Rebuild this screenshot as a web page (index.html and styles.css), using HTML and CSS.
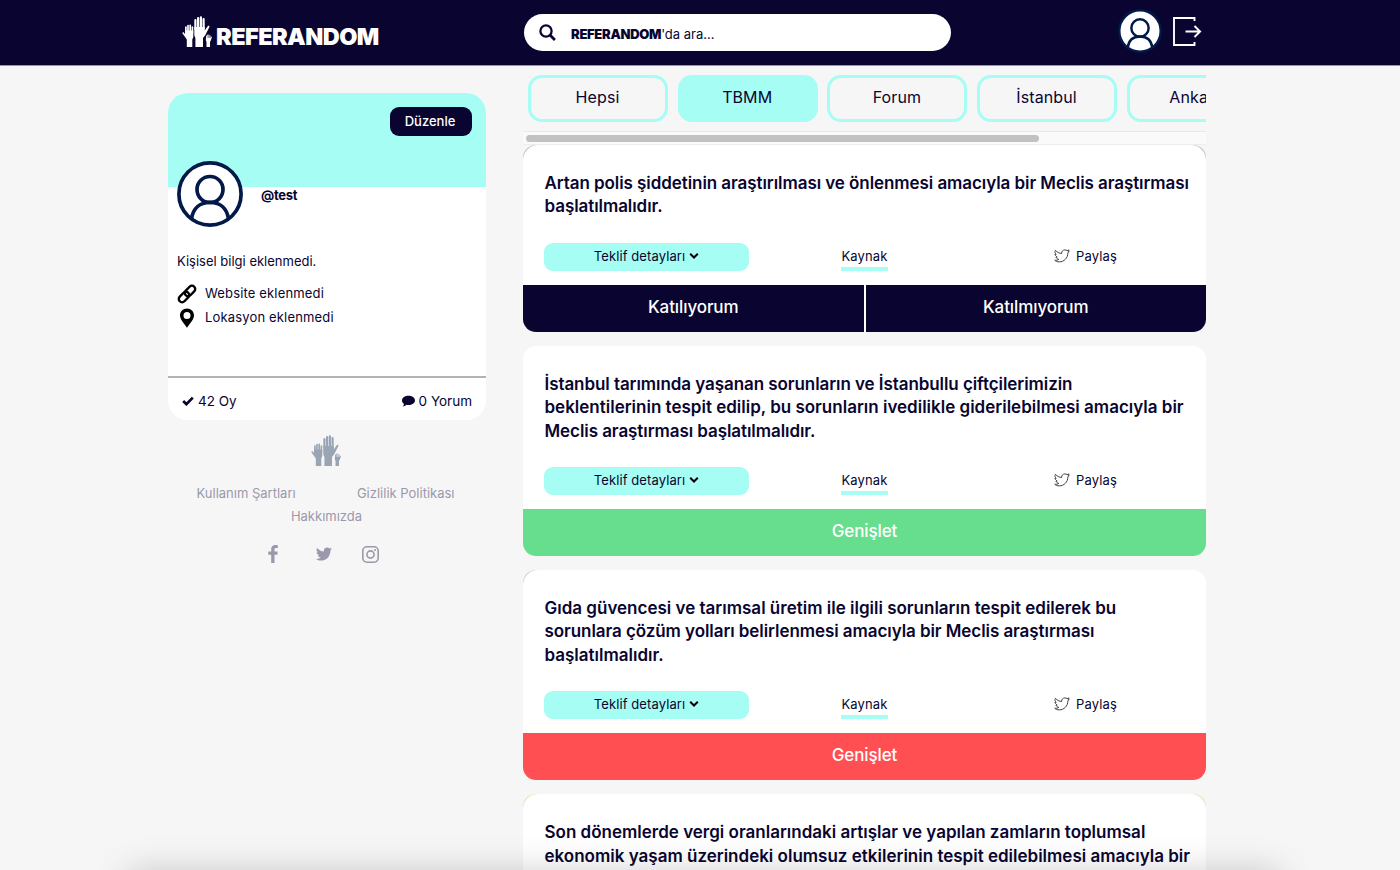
FILE: index.html
```html
<!DOCTYPE html>
<html lang="tr">
<head>
<meta charset="utf-8">
<title>Referandom</title>
<link rel="stylesheet" href="styles.css">
</head>
<body>
<svg class="sprite" width="0" height="0">
  <symbol id="hands" viewBox="0 0 30 31">
    <g fill="currentColor">
      <path d="M12.300 11h10.400v3.500l3.600-5 1.300.9-4.200 8.600-2.400 3V31h-7.600v-9l-1.100-2.500z"/>
      <path d="M3 14.500h8.300V21l-1 2.500V31H4.800v-7.500L.2 17l1.100-.9L3 18z"/>
      <path d="M24 22h4.500l1.100-1.500.4.400-1.200 3.600-.8 1.500v5h-3.500v-5l-.7-2z"/>
    </g>
    <g fill="none" stroke="currentColor" stroke-linecap="round">
      <path stroke-width="2.200" d="M13.400 13V4.200M16.100 13V2.200M18.900 13V1.300M21.600 13V3"/>
      <path stroke-width="1.700" d="M3.900 17v-6M6 17V9.500M8.200 17V9.300M10.400 17v-6"/>
      <path stroke-width=".9" d="M24.500 23v-3M25.700 23v-4M26.900 23v-4M28.100 23v-3"/>
    </g>
  </symbol>
  <symbol id="user" viewBox="0 0 66 66">
    <circle cx="33" cy="33" r="31.200" fill="#fff"/>
    <g fill="none" stroke="#02194a" stroke-width="3.700">
      <circle cx="33" cy="33" r="31.100"/>
      <circle cx="33" cy="28.500" r="13"/>
      <path d="M14.500 58C16 47 23 41.300 33 41.300S50 47 51.500 58"/>
    </g>
  </symbol>
  <symbol id="chevron" viewBox="0 0 10 8"><path d="M1.200 1.700L5 5.500l3.800-3.800" fill="none" stroke="#000" stroke-width="2"/></symbol>
  <symbol id="bird-line" viewBox="0 0 16 14">
    <path d="M.8 11.300c2 .1 3.100-.3 4-.9C3 10 2.200 9 2 8h1.200C1.800 7.300 1 6.200 1 5l1.200.3C.8 4.200.7 2.600 1.400 1.300 3.200 3.400 5.300 4.300 7.700 4.500 7.400 2.500 9 .9 10.800.9c1 0 1.700.3 2.300.8l2-.8-.8 1.700.8-.1-1.300 1.500C14 9 10 12.900 5.200 12.900c-1.700 0-3.200-.5-4.400-1.600z" fill="none" stroke="#444" stroke-width="1"/>
  </symbol>
</svg>

<header class="topbar">
  <div class="topbar-inner">
    <a class="logo"><svg class="logo-hands"><use href="#hands"/></svg><span class="logo-text">REFERANDOM</span></a>
    <div class="search">
      <svg class="search-icon" viewBox="0 0 17 17"><circle cx="7" cy="7" r="5.600" fill="none" stroke="#090530" stroke-width="2.300"/><path d="M11 11l4.900 4.900" stroke="#090530" stroke-width="2.800"/></svg>
      <span class="search-text"><b>REFERANDOM</b>'da ara...</span>
    </div>
    <div class="account">
      <svg class="account-avatar"><use href="#user"/></svg>
      <svg class="logout" viewBox="0 0 29 29" fill="none" stroke="#fff" stroke-width="1.900"><path d="M21.500 4V1H1v27h20.500v-3M12.500 14.500H27M21.500 9l5.600 5.500-5.600 5.500"/></svg>
    </div>
  </div>
</header>

<main class="layout">
  <aside class="sidebar">
    <section class="profile">
      <div class="banner"><button class="edit">Düzenle</button></div>
      <div class="identity">
        <svg class="avatar"><use href="#user"/></svg>
        <strong class="handle">@test</strong>
      </div>
      <div class="about">
        <p class="bio">Kişisel bilgi eklenmedi.</p>
        <p class="fact website"><svg class="fact-icon" viewBox="0 0 20 20" fill="none" stroke="#000" stroke-width="2.400"><rect x="-6" y="-3.300" width="12" height="6.600" rx="3.300" transform="translate(13 7) rotate(-45)"/><rect x="-6" y="-3.300" width="12" height="6.600" rx="3.300" transform="translate(7 13) rotate(-45)"/></svg><span>Website eklenmedi</span></p>
        <p class="fact place"><svg class="fact-icon" viewBox="0 0 20 20"><path fill-rule="evenodd" d="M10 .6c4 0 7 3 7 6.800 0 3.600-3.600 7.500-7 12.300C6.600 14.900 3 11 3 7.400 3 3.600 6 .6 10 .6zm0 3.400a3.500 3.500 0 1 0 0 7 3.500 3.500 0 0 0 0-7z"/></svg><span>Lokasyon eklenmedi</span></p>
      </div>
      <div class="stats">
        <span class="stat votes"><svg width="12" height="10" viewBox="0 0 12 10"><path d="M1.200 5l3.200 3.200 6.400-6.600" fill="none" stroke="#090530" stroke-width="2.700"/></svg><span>42 Oy</span></span>
        <span class="stat comments"><svg width="13" height="12" viewBox="0 0 13 12"><path d="M6.500.8C10 .8 13 2.800 13 5.400S10 10 6.500 10c-.7 0-1.300 0-1.900-.2C3.400 10.800 2 11.400.7 11.400c.8-.8 1.200-1.600 1.300-2.500C.8 8 0 6.800 0 5.400 0 2.800 3 .8 6.500.8z" fill="#090530"/></svg><span>0 Yorum</span></span>
      </div>
    </section>

    <footer class="site-footer">
      <svg class="footer-hands"><use href="#hands"/></svg>
      <nav class="footer-links"><a class="terms">Kullanım Şartları</a><a class="privacy">Gizlilik Politikası</a></nav>
      <a class="aboutus">Hakkımızda</a>
      <div class="social">
        <svg width="10" height="18" viewBox="0 0 10 18"><path d="M9.800.2v2.900H8.100C6.800 3.100 6.500 3.700 6.500 4.600v2h3.200l-.4 3.200H6.500V18H3.200V9.800H.3V6.600h2.900V4.200C3.200 1.400 4.900 0 7.400 0c1.200 0 2.200.1 2.400.2z"/></svg>
        <svg width="16" height="14" viewBox="0 0 16 14"><path d="M16 1.800a7 7 0 0 1-1.600 1.700C14.600 8.600 10.800 13.500 5 13.500c-1.800 0-3.600-.5-5-1.500 1.700.2 3.500-.3 4.800-1.400A3.300 3.300 0 0 1 1.700 8.300c.5.100 1 .1 1.500 0A3.300 3.300 0 0 1 .6 5c.5.300 1 .4 1.500.4A3.300 3.300 0 0 1 1.100 1c1.700 2 4 3.300 6.800 3.500C7.400 2.200 9 .4 11 .4c1 0 1.800.4 2.400 1 .8-.1 1.500-.4 2.100-.8-.2.800-.7 1.400-1.400 1.800.6 0 1.300-.3 1.900-.6z"/></svg>
        <svg width="17" height="17" viewBox="0 0 17 17"><g fill="none" stroke="#9b98ab" stroke-width="1.600"><rect x=".8" y=".8" width="15.400" height="15.400" rx="4.200"/><circle cx="8.500" cy="8.500" r="3.600"/></g><circle cx="13" cy="4" r="1"/></svg>
      </div>
    </footer>
  </aside>

  <section class="feed">
    <div class="tabs">
      <a class="tab">Hepsi</a><a class="tab active">TBMM</a><a class="tab">Forum</a><a class="tab">İstanbul</a><a class="tab">Ankara</a>
    </div>
    <div class="scrollbar"><div class="thumb"></div></div>

    <article class="card edge-gray">
      <h2 class="title snug">Artan polis şiddetinin araştırılması ve önlenmesi amacıyla bir Meclis araştırması<br>başlatılmalıdır.</h2>
      <div class="actions">
        <a class="details">Teklif detayları<svg class="chev"><use href="#chevron"/></svg></a>
        <span class="cell"><a class="source">Kaynak</a></span>
        <a class="cell share"><svg class="bird"><use href="#bird-line"/></svg><span>Paylaş</span></a>
      </div>
      <div class="vote"><a class="choice">Katılıyorum</a><a class="choice">Katılmıyorum</a></div>
    </article>

    <article class="card">
      <h2 class="title"><span class="snug">İstanbul tarımında yaşanan sorunların ve İstanbullu çiftçilerimizin</span><br>beklentilerinin tespit edilip, bu sorunların ivedilikle giderilebilmesi amacıyla bir<br><span class="snug">Meclis araştırması başlatılmalıdır.</span></h2>
      <div class="actions">
        <a class="details">Teklif detayları<svg class="chev"><use href="#chevron"/></svg></a>
        <span class="cell"><a class="source">Kaynak</a></span>
        <a class="cell share"><svg class="bird"><use href="#bird-line"/></svg><span>Paylaş</span></a>
      </div>
      <a class="expand accepted">Genişlet</a>
    </article>

    <article class="card edge-gray-left">
      <h2 class="title">Gıda güvencesi ve tarımsal üretim ile ilgili sorunların tespit edilerek bu<br><span class="snug">sorunlara çözüm yolları belirlenmesi amacıyla bir Meclis araştırması</span><br>başlatılmalıdır.</h2>
      <div class="actions">
        <a class="details">Teklif detayları<svg class="chev"><use href="#chevron"/></svg></a>
        <span class="cell"><a class="source">Kaynak</a></span>
        <a class="cell share"><svg class="bird"><use href="#bird-line"/></svg><span>Paylaş</span></a>
      </div>
      <a class="expand rejected">Genişlet</a>
    </article>

    <article class="card edge-amber">
      <h2 class="title">Son dönemlerde vergi oranlarındaki artışlar ve yapılan zamların toplumsal<br>ekonomik yaşam üzerindeki olumsuz etkilerinin tespit edilebilmesi amacıyla bir</h2>
    </article>
  </section>
</main>
<div class="bottom-shadow"></div>
</body>
</html>
```
FILE: styles.css
```css
* { box-sizing: border-box; }
html { overflow: hidden; }
body {
  position: relative;
  margin: 0;
  height: 870px;
  overflow: hidden;
  background: #f6f6f6;
  color: #090530;
  font: 13px/20px Inter, "Open Sans", sans-serif;
}
p, h2 { margin: 0; }
.sprite { position: absolute; }

.topbar { height: 66px; background: #090530; border-bottom: 1px solid #9896aa; }
.topbar-inner { display: flex; align-items: flex-start; width: 1038px; margin-left: 168px; }
.logo { display: flex; align-items: flex-start; width: 356px; padding: 16px 0 0 14px; color: #fff; }
.logo-hands { width: 30px; height: 31px; }
.logo-text { margin: 7px 0 0 4px; font-weight: 900; font-size: 23.500px; line-height: 28px; letter-spacing: -0.560px; }
.search { display: flex; align-items: center; width: 427px; height: 37px; margin-top: 14px; padding-left: 15px; background: #fff; border-radius: 19px; }
.search-icon { width: 17px; height: 17px; }
.search-text { margin: 2px 0 0 15px; letter-spacing: 0; }
.search-text b { font-weight: 900; letter-spacing: -0.300px; }
.account { display: flex; margin-left: 167px; padding-top: 9px; }
.account-avatar { width: 44px; height: 44px; }
.logout { width: 29px; height: 29px; margin: 8px 0 0 11px; }

.layout { display: flex; gap: 37px; height: 804px; margin-left: 168px; overflow: hidden; }
.sidebar { width: 318px; padding-top: 27px; }
.profile { height: 327px; background: #fff; border-radius: 20px; overflow: hidden; }
.banner { display: flex; justify-content: flex-end; height: 94px; padding: 14px 14px 0 0; background: #a5fdf3; }
.edit { width: 82px; height: 29px; padding: 0 2px 2px 0; border: 0; border-radius: 9px; background: #090530; color: #fff; font: 500 13px Inter, sans-serif; }
.identity { position: relative; display: flex; height: 66px; margin-top: -26px; padding-left: 9px; }
.avatar { width: 66px; height: 66px; flex: none; }
.handle { margin: 24px 0 0 18px; font-weight: 700; letter-spacing: -0.300px; }
.about { height: 149px; padding: 24px 9px 0; }
.bio { margin-bottom: 12px; }
.fact { display: flex; height: 24px; letter-spacing: 0.160px; }
.fact-icon { width: 20px; height: 20px; margin: 1px 8px 0 0; }
.website .fact-icon { margin: 1px 8.500px 0 -0.500px; }
.stats { display: flex; justify-content: space-between; height: 44px; padding: 13px 14px 0 14px; border-top: 2px solid #b3b3b3; }
.stat { display: flex; align-items: center; height: 20px; gap: 4px; font-size: 13.500px; }

.site-footer { display: flex; flex-direction: column; align-items: center; padding-top: 15px; color: #9b98ab; }
.footer-hands { width: 30px; height: 31px; margin-right: 3px; color: #99a5b5; }
.footer-links { display: flex; justify-content: space-between; width: 258px; margin: 17px 3px 0 0; }
.aboutus { margin: 3px 1px 0 0; }
.social { display: flex; align-items: center; height: 18px; margin: 19px 0 0 -7px; gap: 38px; fill: #9b98ab; }
.social svg:last-child { margin-left: -8px; }

.feed { width: 683px; }
.tabs { display: flex; gap: 9.700px; height: 65px; padding: 9px 0 0 5px; overflow: hidden; }
.tab { flex: none; width: 140px; height: 47px; padding-right: 1px; border: 3px solid #a5fdf3; border-radius: 14px; text-align: center; font-size: 16px; line-height: 39px; letter-spacing: 0.100px; }
.active { background: #a5fdf3; }
.scrollbar { height: 14px; padding: 3px; background: #fafafa; border-top: 1px solid #e8e8e8; border-bottom: 1px solid #ededed; }
.thumb { width: 513px; height: 7px; border-radius: 4px; background: #c1c1c1; }
.card { --edge-left: #fff; --edge-right: #fff; position: relative; z-index: 0; display: flex; flex-direction: column; margin-bottom: 14px; padding-top: 27px; background: linear-gradient(90deg, var(--edge-left) 50%, var(--edge-right) 50%) 0 0 / 100% 20px no-repeat #fff; border-radius: 13px; overflow: hidden; }
.card::before { content: ""; position: absolute; z-index: -1; inset: 0 0 auto; height: 40px; border-radius: 15px 15px 0 0; background: #fff; }
.edge-gray { --edge-left: #bbb; --edge-right: #bbb; }
.edge-gray-left { --edge-left: #ccc; }
.edge-amber { --edge-left: #f4d9a9; --edge-right: #f4d9a9; height: 210px; }
.title { padding: 0 0 24px 21.500px; font-weight: 600; font-size: 17px; line-height: 23.400px; white-space: nowrap; }
.snug { letter-spacing: -0.070px; }
.actions { display: flex; height: 28px; margin: 0 0 14px 21px; }
.details { display: flex; flex: none; align-items: center; justify-content: center; width: 205px; gap: 4px; padding-bottom: 2px; border-radius: 9px; background: #a5fdf3; letter-spacing: 0.100px; }
.chev { width: 10px; height: 8px; }
.cell { display: flex; flex: none; justify-content: center; width: 231px; letter-spacing: 0.150px; }
.source { height: 28px; padding-top: 3px; border-bottom: 4px solid #a5fdf3; }
.share { align-items: center; width: 211px; gap: 6px; padding-bottom: 2px; }
.bird { width: 16px; height: 14px; }
.vote { display: flex; gap: 2px; }
.choice, .expand { height: 47px; background: #090530; color: #fff; text-align: center; font-size: 17px; font-weight: 500; line-height: 45px; letter-spacing: -0.100px; }
.choice { flex: 1; }
.accepted { background: #67de8d; }
.rejected { background: #ff4f52; }
.bottom-shadow { position: absolute; left: 134px; top: 878px; width: 1140px; height: 30px; box-shadow: 0 0 36px 6px rgba(0, 0, 0, 0.200); }
```
